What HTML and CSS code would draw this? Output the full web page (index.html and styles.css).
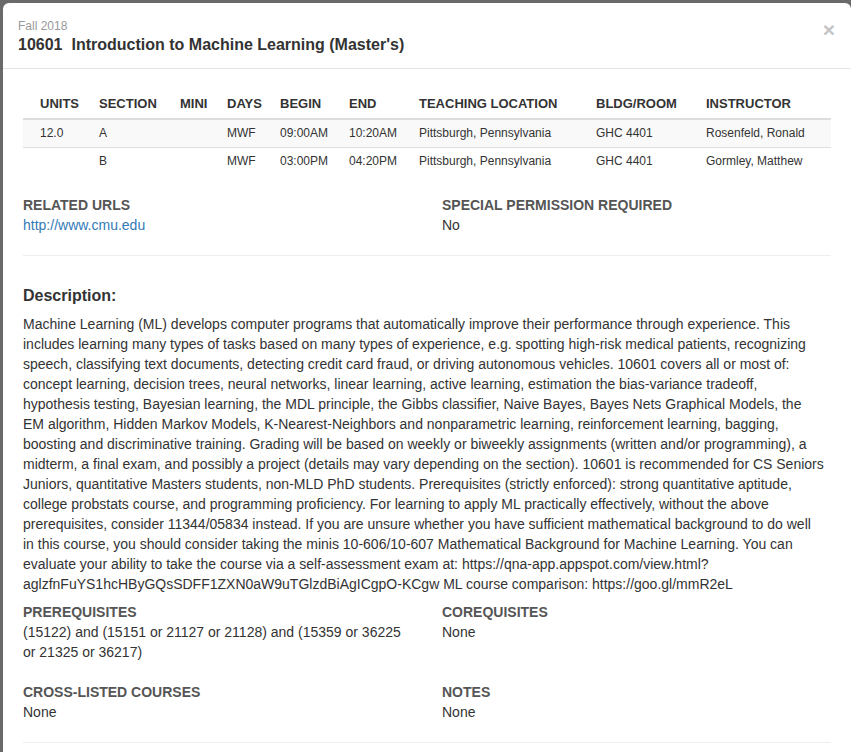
FILE: index.html
```html
<!DOCTYPE html>
<html>
<head>
<meta charset="utf-8">
<link rel="stylesheet" href="styles.css">
</head>
<body>
<div class="backdrop">
  <div class="modal">
    <div class="modal-header">
      <span class="close">&times;</span>
      <div class="term">Fall 2018</div>
      <h3 class="title"><span class="num">10601</span>Introduction to Machine Learning (Master's)</h3>
    </div>
    <div class="modal-body">
      <table class="sections">
        <colgroup>
          <col class="c1"><col class="c2"><col class="c3"><col class="c4"><col class="c5"><col class="c6"><col class="c7"><col class="c8"><col class="c9">
        </colgroup>
        <thead>
          <tr><th>UNITS</th><th>SECTION</th><th>MINI</th><th>DAYS</th><th>BEGIN</th><th>END</th><th>TEACHING LOCATION</th><th>BLDG/ROOM</th><th>INSTRUCTOR</th></tr>
        </thead>
        <tbody>
          <tr class="odd"><td>12.0</td><td>A</td><td></td><td>MWF</td><td>09:00AM</td><td>10:20AM</td><td>Pittsburgh, Pennsylvania</td><td>GHC 4401</td><td>Rosenfeld, Ronald</td></tr>
          <tr><td></td><td>B</td><td></td><td>MWF</td><td>03:00PM</td><td>04:20PM</td><td>Pittsburgh, Pennsylvania</td><td>GHC 4401</td><td>Gormley, Matthew</td></tr>
        </tbody>
      </table>

      <div class="row">
        <div class="col">
          <div class="label">RELATED URLS</div>
          <a class="link" href="#">http://www.cmu.edu</a>
        </div>
        <div class="col">
          <div class="label">SPECIAL PERMISSION REQUIRED</div>
          <div class="value">No</div>
        </div>
      </div>

      <hr class="sep">

      <h4 class="desc-title">Description:</h4>
      <p class="desc">Machine Learning (ML) develops computer programs that automatically improve their performance through experience. This<br>includes learning many types of tasks based on many types of experience, e.g. spotting high-risk medical patients, recognizing<br>speech, classifying text documents, detecting credit card fraud, or driving autonomous vehicles. 10601 covers all or most of:<br>concept learning, decision trees, neural networks, linear learning, active learning, estimation the bias-variance tradeoff,<br>hypothesis testing, Bayesian learning, the MDL principle, the Gibbs classifier, Naive Bayes, Bayes Nets Graphical Models, the<br>EM algorithm, Hidden Markov Models, K-Nearest-Neighbors and nonparametric learning, reinforcement learning, bagging,<br>boosting and discriminative training. Grading will be based on weekly or biweekly assignments (written and/or programming), a<br>midterm, a final exam, and possibly a project (details may vary depending on the section). 10601 is recommended for CS Seniors<br>Juniors, quantitative Masters students, non-MLD PhD students. Prerequisites (strictly enforced): strong quantitative aptitude,<br>college probstats course, and programming proficiency. For learning to apply ML practically effectively, without the above<br>prerequisites, consider 11344/05834 instead. If you are unsure whether you have sufficient mathematical background to do well<br>in this course, you should consider taking the minis 10-606/10-607 Mathematical Background for Machine Learning. You can<br>evaluate your ability to take the course via a self-assessment exam at: https://qna-app.appspot.com/view.html?<br>aglzfnFuYS1hcHByGQsSDFF1ZXN0aW9uTGlzdBiAgICgpO-KCgw ML course comparison: https://goo.gl/mmR2eL</p>

      <div class="row">
        <div class="col">
          <div class="label">PREREQUISITES</div>
          <div class="value">(15122) and (15151 or 21127 or 21128) and (15359 or 36225<br>or 21325 or 36217)</div>
        </div>
        <div class="col">
          <div class="label">COREQUISITES</div>
          <div class="value">None</div>
        </div>
      </div>

      <div class="row">
        <div class="col">
          <div class="label">CROSS-LISTED COURSES</div>
          <div class="value">None</div>
        </div>
        <div class="col">
          <div class="label">NOTES</div>
          <div class="value">None</div>
        </div>
      </div>

      <hr class="sep">
    </div>
  </div>
</div>
</body>
</html>
```

FILE: styles.css
```css
html, body {
  margin: 0;
  padding: 0;
  height: 100%;
  overflow: hidden;
}
body {
  background: #6a6a6a;
  font-family: "Liberation Sans", Arial, sans-serif;
  color: #333;
}
.backdrop {
  padding: 3px 0 0 3px;
}
.modal {
  background: #fff;
  border-radius: 6px 6px 0 0;
  min-height: 800px;
}
.modal-header {
  position: relative;
  padding: 16px 15px 13px 15px;
  border-bottom: 1px solid #e5e5e5;
}
.close {
  position: absolute;
  right: 16px;
  top: 15px;
  font-size: 21px;
  font-weight: bold;
  line-height: 24px;
  color: #c4c4c4;
}
.term {
  font-size: 12px;
  line-height: 14px;
  color: #999;
}
.title {
  margin: 2px 0 0 0;
  font-size: 16px;
  line-height: 20px;
  font-weight: bold;
  color: #333;
}
.title .num {
  margin-right: 9px;
}
.modal-body {
  padding: 20px 20px 20px 20px;
}
.sections {
  width: 808px;
  border-collapse: collapse;
  table-layout: fixed;
}
.c1 { width: 76px; }
.c2 { width: 81px; }
.c3 { width: 47px; }
.c4 { width: 53px; }
.c5 { width: 69px; }
.c6 { width: 70px; }
.c7 { width: 177px; }
.c8 { width: 110px; }
.sections th {
  text-align: left;
  font-size: 13px;
  line-height: 20px;
  font-weight: bold;
  color: #333;
  padding: 5px 0 4px 0;
  border-bottom: 2px solid #ddd;
}
.sections td {
  font-size: 12px;
  line-height: 17px;
  color: #333;
  padding: 5px 0;
  border-top: 1px solid #ddd;
  white-space: nowrap;
}
.sections th:first-child,
.sections td:first-child {
  padding-left: 17px;
}
.sections tbody tr:first-child td {
  border-top: 0;
}
.sections tr.odd td {
  background: #f9f9f9;
}
.row {
  display: grid;
  grid-template-columns: 419px 1fr;
  margin-top: 20px;
}
.label {
  font-size: 14px;
  line-height: 20px;
  font-weight: bold;
  color: #555;
}
.value {
  font-size: 14px;
  line-height: 20px;
  color: #333;
}
.link {
  display: block;
  font-size: 14px;
  line-height: 20px;
  color: #337ab7;
  text-decoration: none;
}
.sep {
  border: 0;
  border-top: 1px solid #eee;
  margin: 20px 0 0 0;
  height: 0;
}
.desc-title {
  margin: 30px 0 8px 0;
  font-size: 16px;
  line-height: 20px;
  font-weight: bold;
  color: #333;
}
.desc {
  margin: 0 0 -12px 0;
  font-size: 14px;
  line-height: 20px;
  color: #333;
  white-space: nowrap;
}
```
